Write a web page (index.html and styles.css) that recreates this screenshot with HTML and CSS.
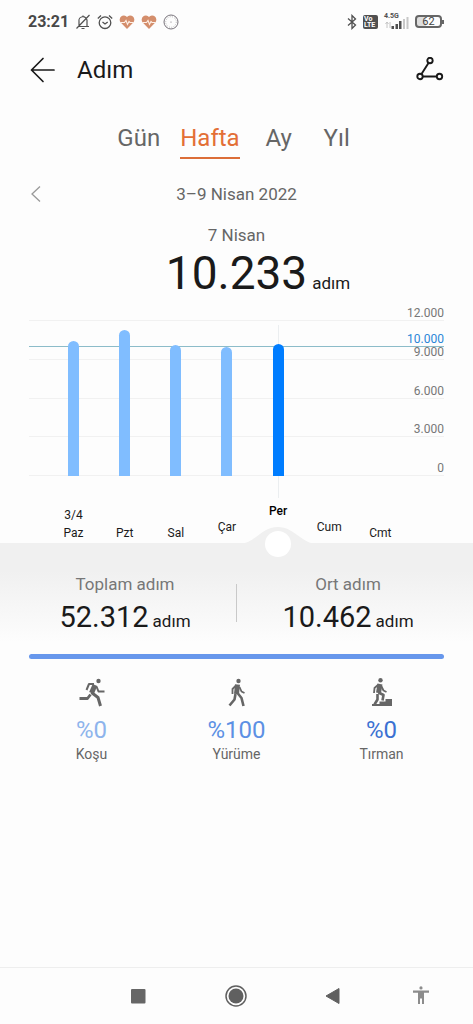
FILE: index.html
```html
<!DOCTYPE html>
<html lang="tr">
<head>
<meta charset="utf-8">
<meta name="viewport" content="width=device-width, initial-scale=1">
<title>Adım</title>
<link rel="stylesheet" href="styles.css">
</head>
<body>
<div class="screen">
  <div class="status">
    <div class="status-group">
      <span class="clock">23:21</span>
      <svg width="16" height="16" viewBox="0 0 16 16" fill="none" stroke="#505050" stroke-width="1.2"><path d="M3 12.5h11M4 12.3V7.500a4 4 0 0 1 8-1.500v6.300M8 3V1.500M6.500 14.500h3M14.500 1 1.500 14.500"/></svg>
      <svg width="16" height="16" viewBox="0 0 16 16" fill="none" stroke="#505050" stroke-width="1.300"><circle cx="8" cy="8.700" r="5.800"/><path d="M.8 4.500 4 1.500M15.200 4.500 12 1.500M5.500 8 8 10l2.700-2"/></svg>
      <svg width="16" height="16" viewBox="0 0 16 16"><path d="M8 15 1.700 8.500A4 4 0 0 1 8 3a4 4 0 0 1 6.300 5.500z" fill="#d48e6c"/><path d="M1.500 8.500h4L7 6.500l1.500 4 1.500-3 1 1h3.500" fill="none" stroke="#fff0e6" stroke-width="1.100"/></svg>
      <svg width="16" height="16" viewBox="0 0 16 16"><path d="M8 15 1.700 8.500A4 4 0 0 1 8 3a4 4 0 0 1 6.300 5.500z" fill="#d48e6c"/><path d="M1.500 8.500h4L7 6.500l1.500 4 1.500-3 1 1h3.500" fill="none" stroke="#fff0e6" stroke-width="1.100"/></svg>
      <svg width="16" height="16" viewBox="0 0 16 16" fill="none" stroke="#77727a"><circle cx="8" cy="8" r="7"/><circle cx="8" cy="8" r="5.300" stroke="#aaa" stroke-width=".8" stroke-dasharray="1 1.300"/><circle cx="8" cy="8" r=".6" fill="#77727a" stroke="none"/></svg>
    </div>
    <div class="status-group">
      <svg width="10" height="16" viewBox="0 0 10 16" fill="none" stroke="#505050" stroke-width="1.300"><path d="M1 4.500 8.500 11 5 14.500v-13L8.500 5 1 11.500"/></svg>
      <span class="volte"><span>Vo</span><span>LTE</span></span>
      <span class="signal">
        <span class="network">4.5G</span>
        <svg width="25" height="12" viewBox="0 0 25 12"><path d="M3 11V5M1.500 7 3 5l1.500 2M6 5v6" stroke="#c4c4c4" fill="none"/><path d="M7.500 9h2.500v3H7.500zM11.500 7H14v5h-2.500zM15 4h2.500v8H15z" fill="#505050"/><path d="M19 2h2v10h-2zM22.500 0h2v12h-2z" fill="#c8c8c8"/></svg>
      </span>
      <span class="battery">62</span>
    </div>
  </div>

  <header class="header">
    <button class="icon-button" aria-label="Geri"><svg width="26" height="26" viewBox="0 0 26 26" fill="none" stroke="#1a1a1a" stroke-width="1.700" stroke-linecap="round" stroke-linejoin="round"><path d="M13 1.500 1.500 13 13 24.500M1.500 13H24"/></svg></button>
    <h1 class="title">Adım</h1>
    <button class="icon-button" aria-label="Rota"><svg width="28" height="26" viewBox="0 0 28 26" fill="none" stroke="#1a1a1a" stroke-width="1.900"><circle cx="14" cy="3.500" r="2.700"/><circle cx="4" cy="19.500" r="2.700"/><circle cx="23.500" cy="19.500" r="2.700"/><path d="M12.500 6 5.500 17M7 19.500h14"/></svg></button>
  </header>

  <nav class="tabs">
    <button class="tab">Gün</button>
    <button class="tab tab-active">Hafta</button>
    <button class="tab">Ay</button>
    <button class="tab">Yıl</button>
  </nav>

  <div class="period">
    <button class="icon-button previous" aria-label="Önceki hafta"><svg width="12" height="18" viewBox="0 0 12 18" fill="none" stroke="#999" stroke-width="1.300"><path d="M10 1.500 2 9l8 7.500"/></svg></button>
    <span>3–9 Nisan 2022</span>
  </div>

  <section class="selected">
    <div class="selected-date">7 Nisan</div>
    <div class="selected-value"><strong class="big">10.233</strong><span class="unit">adım</span></div>
  </section>

  <section class="chart">
    <div class="plot">
      <div class="scale">
        <span>12.000</span><span>9.000</span><span>6.000</span><span>3.000</span><span>0</span>
      </div>
      <div class="bars">
        <div class="slot"><span class="bar" style="height:87%"></span></div>
        <div class="slot"><span class="bar" style="height:94%"></span></div>
        <div class="slot"><span class="bar" style="height:84.500%"></span></div>
        <div class="slot"><span class="bar" style="height:83%"></span></div>
        <div class="slot slot-active"><span class="bar" style="height:85%"></span></div>
        <div class="slot"></div>
        <div class="slot"></div>
      </div>
      <div class="goal">10.000</div>
    </div>
    <div class="days">
      <span class="day">3/4<br>Paz</span>
      <span class="day">Pzt</span>
      <span class="day">Sal</span>
      <span class="day day-near">Çar</span>
      <span class="day day-active">Per
        <svg class="knob" width="90" height="34" viewBox="0 0 90 34"><path d="M5 18C22 18 28 1 45 1S68 18 85 18z" fill="#f0f0f0"/><circle cx="45" cy="18" r="13" fill="#fff"/></svg>
      </span>
      <span class="day day-near">Cum</span>
      <span class="day">Cmt</span>
    </div>
  </section>

  <section class="summary">
    <div class="total">
      <div class="total-label">Toplam adım</div>
      <div class="total-value"><strong class="medium">52.312</strong><span class="unit">adım</span></div>
    </div>
    <div class="divider"></div>
    <div class="total">
      <div class="total-label">Ort adım</div>
      <div class="total-value"><strong class="medium">10.462</strong><span class="unit">adım</span></div>
    </div>
  </section>

  <div class="split"></div>

  <section class="activities">
    <div class="activity">
      <svg width="28" height="30" viewBox="0 0 28 30" fill="none" stroke="#666" stroke-linejoin="round"><circle cx="20.500" cy="4" r="2.200" fill="#666" stroke="none"/><path d="M17 8 13.500 16" stroke-width="5"/><path d="M16 7H11L8.500 13" stroke-width="2"/><path d="M18.500 9.500 20.500 14.500h6" stroke-width="2"/><path d="M13.500 15.500 20 20.500 22.500 29" stroke-width="3"/><path d="M12.500 17.500 9.500 21.500H1.500" stroke-width="2.800"/></svg>
      <strong class="percent running">%0</strong>
      <span>Koşu</span>
    </div>
    <div class="activity">
      <svg width="28" height="30" viewBox="0 0 28 30" fill="none" stroke="#666" stroke-linejoin="round"><circle cx="15.500" cy="4" r="2.200" fill="#666" stroke="none"/><path d="M14.500 7.500 13.500 17" stroke-width="5"/><path d="M13 8.500 9.500 12v5" stroke-width="1.800"/><path d="M16.500 10 18.500 14.500 21.500 16" stroke-width="1.800"/><path d="M14.500 16 18.500 21 20.500 29" stroke-width="2.600"/><path d="M12.500 17 11.500 22.500 6.500 28.500" stroke-width="2.600"/></svg>
      <strong class="percent walking">%100</strong>
      <span>Yürüme</span>
    </div>
    <div class="activity">
      <svg width="28" height="30" viewBox="0 0 28 30" fill="none" stroke="#666" stroke-linejoin="round"><circle cx="12.500" cy="3.200" r="2.200" fill="#666" stroke="none"/><path d="M12 7 10.500 16" stroke-width="5"/><path d="M10.500 7.500 6.500 11 6 16" stroke-width="1.800"/><path d="M13.500 9.500 15.500 13.500l3 1.500" stroke-width="1.800"/><path d="M10.500 15.500 15.500 18 14.500 23.500" stroke-width="2.600"/><path d="M9.500 17v5.500L6.500 27.500" stroke-width="2.600"/><path d="M4 29v-2h7.500v-2.500h6V22H24v7z" fill="#666" stroke="none"/></svg>
      <strong class="percent climbing">%0</strong>
      <span>Tırman</span>
    </div>
  </section>

  <nav class="system">
    <button class="icon-button" aria-label="Son uygulamalar"><svg width="16" height="16" viewBox="0 0 16 16"><rect x="1" y="1" width="14.500" height="14.500" rx="1" fill="#666"/></svg></button>
    <button class="icon-button" aria-label="Ana ekran"><svg width="24" height="24" viewBox="0 0 24 24"><circle cx="12" cy="12" r="10" fill="none" stroke="#606060" stroke-width="1.500"/><circle cx="12" cy="12" r="7.500" fill="#606060"/></svg></button>
    <button class="icon-button" aria-label="Geri dön"><svg width="16" height="18" viewBox="0 0 16 18"><path d="M1 9 14 1.500v15z" fill="#606060" stroke="#606060" stroke-linejoin="round"/></svg></button>
    <button class="icon-button" aria-label="Erişilebilirlik"><svg width="18" height="20" viewBox="0 0 18 20" fill="#8c8c8c"><circle cx="9" cy="1.900" r="1.600"/><path d="M1 4.500h16v2.200h-5V18h-2v-5.500H8V18H6V6.700H1z"/></svg></button>
  </nav>
</div>
</body>
</html>
```

FILE: styles.css
```css
* { box-sizing: border-box; }

body {
  margin: 0;
  background: #fdfdfd;
  color: #1a1a1a;
  font-family: Roboto, "Noto Sans", sans-serif;
  font-size: 14px;
}

button {
  margin: 0;
  padding: 0;
  border: 0;
  background: none;
  color: inherit;
  font: inherit;
}

svg { display: block; }
strong { font-weight: 400; }

.screen {
  display: flex;
  flex-direction: column;
  min-height: 100vh;
}

.icon-button {
  display: flex;
  align-items: center;
  justify-content: center;
}

/* Status bar */
.status {
  display: flex;
  align-items: center;
  justify-content: space-between;
  height: 43px;
  padding: 0 31px 0 28px;
}

.status-group {
  display: flex;
  align-items: center;
  gap: 6px;
}

.clock {
  color: #484848;
  font-size: 16px;
  font-weight: 700;
}

.volte {
  display: flex;
  flex-direction: column;
  width: 15px;
  height: 14px;
  padding: 1px;
  border-radius: 2px;
  background: #505050;
  color: #fff;
  font-size: 7px;
  font-weight: 700;
  line-height: 6px;
}

.signal {
  position: relative;
  padding-top: 2px;
}

.network {
  position: absolute;
  top: -3px;
  left: 0;
  color: #505050;
  font-size: 7px;
  font-weight: 700;
  line-height: 8px;
}

.battery {
  position: relative;
  width: 27px;
  height: 13px;
  border: 2px solid #666;
  border-radius: 4px;
  background: linear-gradient(90deg, #dedede 40%, #fdfdfd 40%);
  color: #444;
  font-size: 11px;
  line-height: 10px;
  text-align: center;
}

.battery::after {
  content: "";
  position: absolute;
  top: 3px;
  right: -4px;
  width: 2px;
  height: 4px;
  background: #666;
}

/* Title bar */
.header {
  display: flex;
  align-items: center;
  height: 53px;
  padding: 0 29px 0 30px;
}

.title {
  flex: 1;
  margin: 0;
  padding-left: 21px;
  font-size: 24px;
  font-weight: 400;
}

/* Range tabs */
.tabs {
  display: flex;
  justify-content: center;
  gap: 20px;
  padding-top: 23px;
}

.tab {
  min-width: 38px;
  height: 40px;
  border-bottom: 2px solid transparent;
  color: #666;
  font-size: 24px;
  line-height: 34px;
}

.tab-active {
  border-color: #dc6e38;
  color: #e36f36;
}

.period {
  display: grid;
  grid-template-columns: 1fr auto 1fr;
  align-items: center;
  height: 40px;
  margin-top: 15px;
  padding: 0 30px;
  color: #666;
  font-size: 17px;
}

.previous { justify-self: start; }

/* Selected day */
.selected-date {
  padding-top: 11px;
  color: #666;
  font-size: 17px;
  line-height: 20px;
  text-align: center;
}

.selected-value {
  display: grid;
  grid-template-columns: 1fr auto 1fr;
  align-items: baseline;
}

.big {
  grid-column: 2;
  font-size: 46px;
  line-height: 56px;
}

.unit {
  margin-left: 5px;
  font-size: 17px;
}

/* Weekly chart */
.chart { padding: 6px 29px 0; }

.plot {
  position: relative;
  display: grid;
  height: 169px;
}

.scale,
.bars { grid-area: 1 / 1; }

.scale {
  display: flex;
  flex-direction: column;
  justify-content: space-between;
}

.scale span,
.goal {
  height: 14px;
  border-bottom: 1px solid #f1f1f1;
  color: #777;
  font-size: 12px;
  line-height: 13px;
  text-align: right;
}

.goal {
  position: absolute;
  right: 0;
  bottom: 129px;
  left: 0;
  border-color: #8cbcc9;
  color: #2a86d8;
}

.bars,
.days {
  display: grid;
  grid-template-columns: repeat(7, 1fr);
  padding: 0 38px 0 19px;
}

.bars {
  z-index: 1;
  padding-top: 14px;
}

.slot {
  position: relative;
  display: flex;
  align-items: flex-end;
  justify-content: center;
}

.slot-active::before {
  content: "";
  position: absolute;
  top: 4px;
  bottom: -22px;
  width: 1px;
  background: #ebeef0;
}

.bar {
  z-index: 1;
  width: 11px;
  border-radius: 6px 6px 0 0;
  background: #80bdff;
}

.slot-active .bar { background: #007dff; }

.days {
  align-items: end;
  height: 67px;
}

.day {
  position: relative;
  padding-bottom: 1px;
  font-size: 12px;
  line-height: 18px;
  text-align: center;
}

.day-near { padding-bottom: 7px; }

.day-active {
  padding-bottom: 23px;
  color: #000;
  font-weight: 500;
}

.knob {
  position: absolute;
  bottom: -17px;
  left: 50%;
  margin-left: -45px;
}

/* Weekly totals */
.summary {
  display: grid;
  grid-template-columns: 1fr 1px 1fr;
  padding: 30px 14px 14px;
  background: linear-gradient(#f0f0f0 25%, #fdfdfd 90%);
}

.total { text-align: center; }

.total-label {
  color: #777;
  font-size: 17px;
  line-height: 22px;
}

.total-value {
  margin-top: 4px;
  line-height: 36px;
}

.total-value .unit { margin-left: 4px; }
.medium { font-size: 29px; }

.divider {
  height: 38px;
  margin-top: 11px;
  background: #c9c9c9;
}

.split {
  height: 5px;
  margin: 0 29px;
  border-radius: 3px;
  background: #6797ec;
}

.activities {
  display: grid;
  grid-template-columns: repeat(3, 1fr);
  padding: 18px 19px;
}

.activity {
  display: flex;
  flex-direction: column;
  align-items: center;
  color: #666;
  font-size: 14px;
  line-height: 18px;
}

.percent {
  margin-top: 8px;
  font-size: 24px;
  line-height: 30px;
}

.running { color: #8db4ec; }
.walking { color: #5c90e4; }
.climbing { color: #3b71d2; }

/* System navigation */
.system {
  display: grid;
  grid-template-columns: 98fr 98fr 98fr 78fr;
  height: 57px;
  margin-top: auto;
  padding: 0 13px 0 89px;
  border-top: 1px solid #eee;
}
```
